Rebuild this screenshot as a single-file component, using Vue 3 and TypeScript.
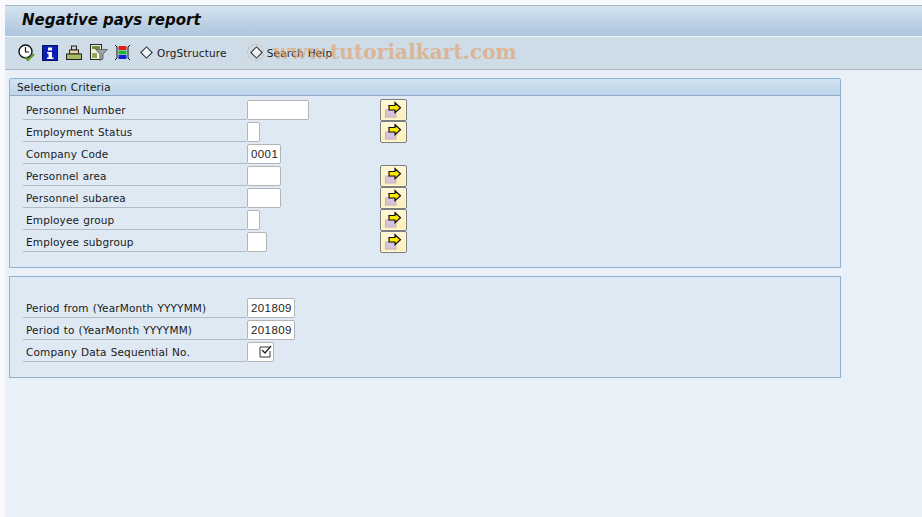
<template>
  <div class="screen">
    <div class="title-bar"><h1>Negative pays report</h1></div>
    <div class="toolbar">
      <button class="tool" title="Execute">
        <svg width="18" height="18" viewBox="0 0 18 18">
          <circle cx="7.5" cy="7.5" r="6.5" fill="#fff" stroke="#111" stroke-width="1.4" />
          <path d="M7.5 3v5h3.5" fill="none" stroke="#111" stroke-width="1.2" />
          <path d="M7 13l3 3 6-6" fill="none" stroke="#5d9a2c" stroke-width="2.2" />
        </svg>
      </button>
      <button class="tool" title="Information">
        <svg width="16" height="16" viewBox="0 0 16 16">
          <rect x="0.5" y="0.5" width="15" height="15" fill="#0a1fb4" stroke="#00105e" />
          <path d="M6 2.500h4v3H6zM5 7h5v5.500h1.500V14h-6.500v-1.500H6.500V8.500H5z" fill="#fff" />
        </svg>
      </button>
      <button class="tool" title="Print">
        <svg width="18" height="16" viewBox="1 0 18 16">
          <rect x="6.500" y="1" width="5" height="4" fill="#d8d4c4" stroke="#222" />
          <rect x="4.500" y="5" width="9" height="4" fill="#e8d9a0" stroke="#222" />
          <rect x="1.500" y="9" width="15" height="5.500" fill="#a9bb62" stroke="#222" />
        </svg>
      </button>
      <button class="tool" title="Filter">
        <svg width="18" height="17" viewBox="0 0 18 17">
          <rect x="0.500" y="0.500" width="11" height="15" fill="#f3f0df" stroke="#222" />
          <rect x="2" y="2" width="8" height="3" fill="#6f8f3a" />
          <rect x="2" y="9" width="5" height="5" fill="#8fa860" />
          <path d="M5.500 5.500h12l-4.500 4.500v5l-3 1.500V10z" fill="#9aa3a8" stroke="#555" stroke-width="0.8" />
        </svg>
      </button>
      <button class="tool" title="Layout">
        <svg width="17" height="17" viewBox="0 0 17 17">
          <path d="M1 1l2 2v11l-2 2M16 1l-2 2v11l2 2" fill="none" stroke="#111" />
          <rect x="4.500" y="2" width="8" height="4" fill="#e0201c" />
          <rect x="4.500" y="6.500" width="8" height="4" fill="#1fb13a" />
          <rect x="4.500" y="11" width="8" height="4" fill="#1420d8" />
        </svg>
      </button>
      <button class="text-tool org"><i class="diamond"></i>OrgStructure</button>
      <button class="text-tool help"><i class="diamond"></i>Search Help</button>
    </div>

    <section class="panel first">
      <header>Selection Criteria</header>
      <div class="rows">
        <div v-for="r in criteria" :key="r.label" class="row">
          <label>{{ r.label }}</label>
          <div class="field-cell">
            <span class="field" :style="{ width: r.width + 'px' }">{{ r.value }}</span>
          </div>
          <button v-if="r.more" class="more">
            <svg width="25" height="20" viewBox="1 1 25 20">
              <rect x="5.500" y="11" width="10.500" height="7" fill="#d5c4dc" stroke="#b8a8c4" stroke-width="0.8" />
              <path d="M9 6.500h6V3.700l5.500 5-5.500 5V11H9z" fill="#ffe800" stroke="#111" stroke-width="1.200" />
            </svg>
          </button>
        </div>
      </div>
    </section>

    <section class="panel second">
      <div class="rows">
        <div v-for="r in periods" :key="r.label" class="row">
          <label>{{ r.label }}</label>
          <div class="field-cell">
            <span class="field" :style="{ width: r.width + 'px' }">{{ r.value }}</span>
          </div>
        </div>
        <div class="row">
          <label>Company Data Sequential No.</label>
          <div class="field-cell">
            <span class="field check">
              <svg width="13" height="13" viewBox="0 0 13 13">
                <path d="M1 2h9M1 2v10h10V6" fill="none" stroke="#333" />
                <path d="M3 5l3 3 6-7" fill="none" stroke="#222" stroke-width="1.300" />
              </svg>
            </span>
          </div>
        </div>
      </div>
    </section>

    <div class="watermark">
      <i></i>
      <span>www.tutorialkart.com</span>
    </div>
  </div>
</template>

<script setup lang="ts">
interface Row {
  label: string
  width: number
  value?: string
  more?: boolean
}

const criteria: Row[] = [
  { label: 'Personnel Number', width: 62, more: true },
  { label: 'Employment Status', width: 13, more: true },
  { label: 'Company Code', width: 34, value: '0001' },
  { label: 'Personnel area', width: 34, more: true },
  { label: 'Personnel subarea', width: 34, more: true },
  { label: 'Employee group', width: 13, more: true },
  { label: 'Employee subgroup', width: 20, more: true },
]

const periods: Row[] = [
  { label: 'Period from (YearMonth YYYYMM)', width: 48, value: '201809' },
  { label: 'Period to (YearMonth YYYYMM)', width: 48, value: '201809' },
]
</script>

<style>
html,
body {
  margin: 0;
  background: #f7f9fc;
}
</style>

<style scoped>
.screen {
  position: relative;
  width: 917px;
  height: 512px;
  margin: 5px 0 0 5px;
  background: #e9f0f7;
  font-family: "DejaVu Sans", Arial, sans-serif;
  font-size: 10.500px;
  letter-spacing: 0.15px;
  word-spacing: 0.5px;
  color: #1a1a1a;
  overflow: hidden;
}

.title-bar {
  height: 31px;
  border-top: 1px solid #a9b4c2;
  box-sizing: border-box;
  background: linear-gradient(#d3e2ef, #adc5dd);
  padding-left: 17px;
}

.title-bar h1 {
  margin: 0;
  font-size: 15px;
  font-style: italic;
  font-weight: bold;
  letter-spacing: 0;
  word-spacing: 0;
  line-height: 28px;
  color: #0a0a0a;
}

.toolbar {
  display: flex;
  align-items: center;
  height: 34px;
  box-sizing: border-box;
  border-top: 1px solid #eef4f9;
  border-bottom: 1px solid #a9b6c4;
  background: #cedce7;
  padding: 0 0 1px 13px;
}

.tool {
  width: 18px;
  height: 18px;
  padding: 0;
  margin-right: 6px;
  border: 0;
  background: none;
  display: flex;
  align-items: center;
}

.text-tool {
  display: flex;
  align-items: center;
  gap: 6px;
  padding: 0;
  border: 0;
  background: none;
  font: inherit;
  letter-spacing: inherit;
  word-spacing: inherit;
  color: #1a1a1a;
}

.org {
  margin-left: 4px;
}

.help {
  margin-left: 25px;
}

.diamond {
  width: 7px;
  height: 7px;
  border: 1px solid #222;
  background: #eef3f7;
  transform: rotate(45deg);
}

.panel {
  width: 832px;
  box-sizing: border-box;
  margin-left: 4px;
  border: 1px solid #8fb1d2;
  background: #dee9f3;
}

.first {
  margin-top: 8px;
  height: 190px;
  border-radius: 2px 2px 0 0;
}

.second {
  margin-top: 8px;
  height: 102px;
  padding-top: 20px;
}

.panel header {
  height: 17px;
  box-sizing: border-box;
  border-bottom: 1px solid #8fa9c4;
  background: linear-gradient(#d3e3f1, #bdd4e9);
  padding-left: 7px;
  line-height: 16px;
}

.first .rows {
  padding-top: 3px;
}

.row {
  display: flex;
  height: 22px;
}

.row label {
  width: 224px;
  height: 21px;
  box-sizing: border-box;
  margin-left: 13px;
  padding: 3px 0 0 3px;
  border-bottom: 1px solid #b3bcc6;
  line-height: 16px;
}

.field-cell {
  width: 133px;
  padding-top: 1px;
}

.field {
  display: block;
  height: 20px;
  box-sizing: border-box;
  border: 1px solid #b4b4b4;
  border-radius: 2px;
  background: #fff;
  padding-left: 3px;
  font-family: "Liberation Sans", sans-serif;
  font-size: 11.500px;
  letter-spacing: 0.4px;
  line-height: 18px;
  color: #222;
}

.check {
  width: 27px;
  padding: 2px 0 0 11px;
}

.more {
  width: 27px;
  height: 22px;
  padding: 0;
  border: 1px solid #7d7d7d;
  border-radius: 2px;
  background: linear-gradient(#fff8d8, #fdeeb4);
  box-shadow: inset 0 0 0 1px #fff8dc;
  display: flex;
  align-items: center;
}

.watermark {
  position: absolute;
  left: 242px;
  top: 35px;
  display: flex;
  align-items: center;
  gap: 9px;
  color: #e1a36c;
  opacity: 0.65;
  pointer-events: none;
}

.watermark i {
  width: 15px;
  height: 15px;
  border: 1px dashed #e1a36c;
  border-radius: 50%;
}

.watermark span {
  font-family: "DejaVu Serif", serif;
  font-size: 20px;
  font-weight: bold;
  letter-spacing: 0.1px;
  word-spacing: 0;
  white-space: nowrap;
}
</style>
